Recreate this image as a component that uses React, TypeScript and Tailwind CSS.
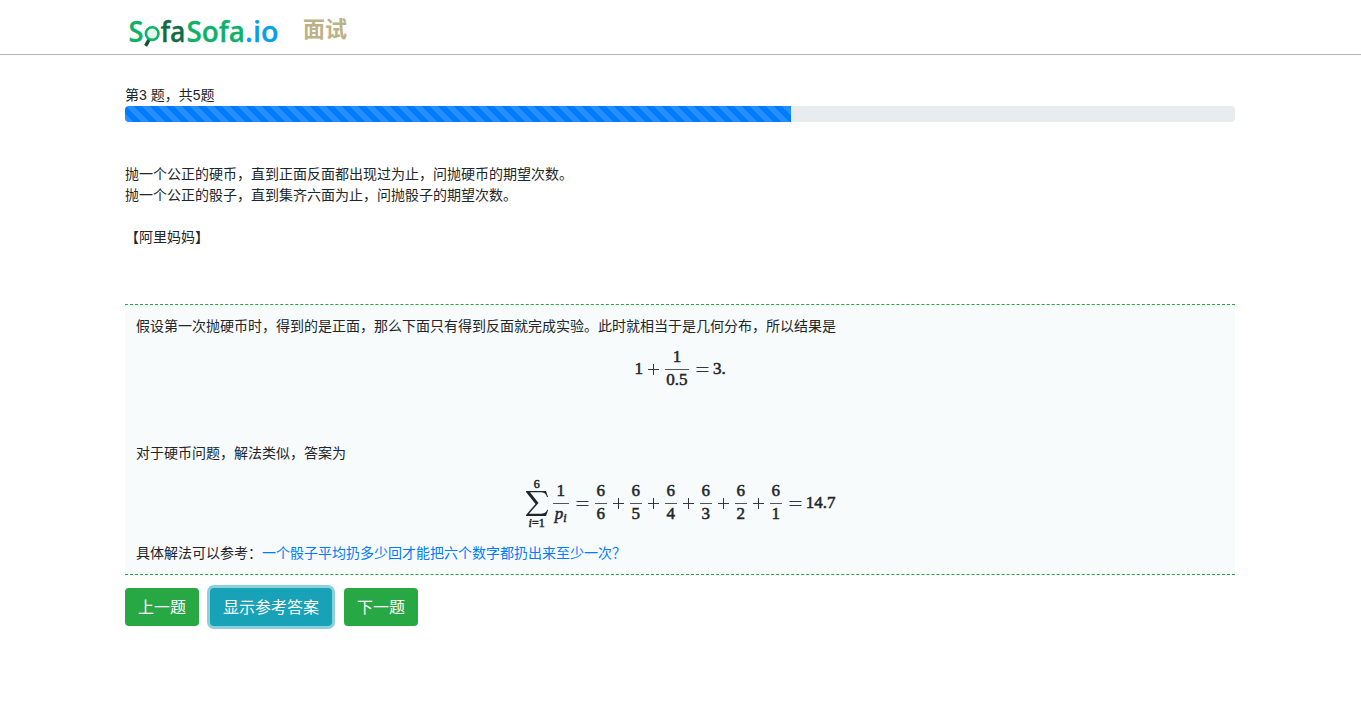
import React from "react";

const math = "font-['Liberation_Serif',serif] text-[17px] leading-[20px] [-webkit-text-stroke:0.5px_#212529]";

function Logo() {
  return (
    <svg width="152" height="54" viewBox="0 -14 152 54" className="block overflow-visible" fontFamily="'Open Sans', 'Noto Sans', sans-serif" fontWeight="600" fontSize="28">
      <text x="0.5" y="27.5" fill="#0bb268" stroke="#0bb268" strokeWidth="0.3" textLength="15" lengthAdjust="spacingAndGlyphs">S</text>
      <circle cx="24.2" cy="19.6" r="6.3" fill="#e3f5ec" stroke="#0bb268" strokeWidth="2.6" />
      <path d="M20.8 26.2 17.6 31.8" stroke="#0b5236" strokeWidth="3.4" />
      <text x="32.5" y="27.5" fill="#106b46" stroke="#106b46" strokeWidth="0.3" textLength="25" lengthAdjust="spacingAndGlyphs">fa</text>
      <text x="58.5" y="27.5" fill="#0bb268" stroke="#0bb268" strokeWidth="0.3" textLength="58.5" lengthAdjust="spacingAndGlyphs">Sofa</text>
      <text x="117" y="27.5" fill="#089fe8" stroke="#089fe8" strokeWidth="0.3" textLength="33.5" lengthAdjust="spacingAndGlyphs">.io</text>
    </svg>
  );
}

function Frac({ top, bottom, width = "w-[12px]" }: { top: React.ReactNode; bottom: React.ReactNode; width?: string }) {
  return (
    <span className={`flex flex-col items-center ${width}`}>
      <span className="h-[22px]">{top}</span>
      <span className="h-px w-full shrink-0 bg-[#50565b]" />
      <span className="h-[22px]">{bottom}</span>
    </span>
  );
}

function Op({ kind }: { kind: "plus" | "equals" }) {
  return (
    <svg width="13" height="13" viewBox="0 0 13 13" className="shrink-0" stroke="#33383c" strokeWidth="1">
      {kind === "plus" ? <path d="M1 6.5h11M6.5 1v11" /> : <path d="M0.5 4.5h12M0.5 8.5h12" />}
    </svg>
  );
}

export default function App() {
  return (
    <div className="min-h-[728px] bg-white font-['Liberation_Sans','Noto_Sans_CJK_SC',sans-serif] text-sm leading-[21px] text-[#212529]">
      <header className="h-[55px] border-b border-[#b5b5b5]">
        <div className="mx-auto flex w-[1111px] pl-[3px]">
          <Logo />
          <span className="ml-[23px] mt-[14px] text-[22px] leading-[32px] font-bold text-[#bdb186]">面试</span>
        </div>
      </header>

      <main className="mx-auto w-[1111px] pt-[30px]">
        <div>第3 题，共5题</div>
        <div className="h-4 w-[1110px] overflow-hidden rounded bg-[#e9ecef]">
          <div className="h-full w-3/5 bg-[#007bff] bg-[linear-gradient(45deg,rgba(255,255,255,.15)_25%,transparent_25%,transparent_50%,rgba(255,255,255,.15)_50%,rgba(255,255,255,.15)_75%,transparent_75%,transparent)] bg-[length:16px_16px]" />
        </div>

        <div className="mt-[42px]">
          <p>抛一个公正的硬币，直到正面反面都出现过为止，问抛硬币的期望次数。</p>
          <p>抛一个公正的骰子，直到集齐六面为止，问抛骰子的期望次数。</p>
          <p className="mt-[21px]">【阿里妈妈】</p>
        </div>

        <section className="mt-[56px] h-[271px] w-[1110px] border-y border-dashed border-[#28a745] bg-[#f7fbfc] pr-[9px] pl-[11px] pt-[11px]">
          <p>假设第一次抛硬币时，得到的是正面，那么下面只有得到反面就完成实验。此时就相当于是几何分布，所以结果是</p>
          <div className={`mt-[10px] flex h-[45px] items-center justify-center pr-[2px] ${math}`}>
            <span className="-mt-[2px]">1</span>
            <span className="mr-[5px] ml-[4px] flex"><Op kind="plus" /></span>
            <Frac top="1" bottom="0.5" width="w-[24px]" />
            <span className="mr-[4px] ml-[7px] flex"><Op kind="equals" /></span>
            <span className="-mt-[2px]">3.</span>
          </div>
          <p className="mt-[51px]">对于硬币问题，解法类似，答案为</p>
          <div className={`mt-[14px] flex h-[51px] items-center justify-center pr-[2px] ${math}`}>
            <span className="flex w-[24px] flex-col items-center text-[12px] leading-[12px]">
              <span>6</span>
              <svg width="24" height="27" viewBox="0 0 24 27" className="shrink-0" fill="#212529">
                <path d="M1 1h20l2 6h-1c-1-3.5-3-4.7-7-4.7H5L13.5 13 4 23.7h11c4 0 6-1 7.2-4h1L21 26H1v-1L10.5 14 1 2z" />
              </svg>
              <span><i>i</i>=1</span>
            </span>
            <span className="w-[4px]" />
            <Frac top="1" bottom={<i>p<sub className="bottom-[-3px] text-[12px]">i</sub></i>} width="w-[16px]" />
            <span className="mr-[6px] ml-[7px] flex"><Op kind="equals" /></span>
            {["6", "5", "4", "3", "2", "1"].map((d, i) => (
              <span key={d} className="flex items-center">
                {i > 0 && <span className="mx-[5px] flex"><Op kind="plus" /></span>}
                <Frac top="6" bottom={d} />
              </span>
            ))}
            <span className="mr-[4px] ml-[7px] flex"><Op kind="equals" /></span>
            <span className="-mt-[2px]">14.7</span>
          </div>
          <p className="mt-[14px]">具体解法可以参考：<a href="#" className="text-[#007bff]">一个骰子平均扔多少回才能把六个数字都扔出来至少一次？</a></p>
        </section>

        <div className="mt-[13px] flex text-base leading-6 text-white">
          <button className="h-[38px] w-[74px] rounded bg-[#28a745] pt-px">上一题</button>
          <button className="ml-[11px] h-[38px] w-[122px] rounded bg-[#17a2b8] pt-px shadow-[0_0_0_3px_#8bd0db]">显示参考答案</button>
          <button className="ml-[12px] h-[38px] w-[74px] rounded bg-[#28a745] pt-px">下一题</button>
        </div>
      </main>
    </div>
  );
}
